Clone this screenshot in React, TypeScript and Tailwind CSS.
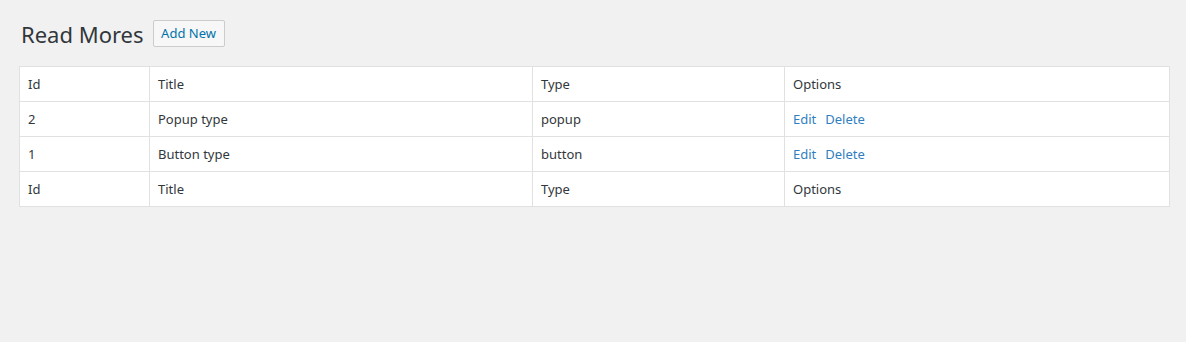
import React from "react";

const rows = [
  { id: "2", title: "Popup type", type: "popup" },
  { id: "1", title: "Button type", type: "button" },
];

const cell = "border border-[#e1e1e1] pl-2 pr-2 pt-[2px] pb-0 h-[35px] text-left align-middle font-normal";

export default function App() {
  return (
    <div
      className="w-[1186px] h-[342px] bg-[#f1f1f1] text-[#32373c] text-[13px]"
      style={{ fontFamily: '"Segoe UI", "Noto Sans", sans-serif' }}
    >
      <div className="pl-[20px] pt-[20px] flex items-center h-[27px] box-content">
        <h1 className="text-[22px] leading-[27px] font-normal text-[#32373c] ml-[1px] pt-[1px]">Read Mores</h1>
        <button className="ml-[9px] h-[27px] w-[72px] border border-[#cccccc] rounded-[2px] bg-[#f7f7f7] text-[#0073aa] text-[13px] font-normal leading-none">
          Add New
        </button>
      </div>
      <div className="pl-[19px] pt-[19px]">
        <table className="table-fixed border-collapse bg-white w-[1150px]">
          <colgroup>
            <col className="w-[130px]" />
            <col className="w-[383px]" />
            <col className="w-[252px]" />
            <col className="w-[385px]" />
          </colgroup>
          <thead>
            <tr>
              <th className={cell}>Id</th>
              <th className={cell}>Title</th>
              <th className={cell}>Type</th>
              <th className={cell}>Options</th>
            </tr>
          </thead>
          <tbody>
            {rows.map((r) => (
              <tr key={r.id}>
                <td className={cell}>{r.id}</td>
                <td className={cell}>{r.title}</td>
                <td className={cell}>{r.type}</td>
                <td className={cell}>
                  <span className="text-[#2f7fc0]">Edit</span>
                  <span className="text-[#2f7fc0] ml-[9px]">Delete</span>
                </td>
              </tr>
            ))}
          </tbody>
          <tfoot>
            <tr>
              <th className={cell}>Id</th>
              <th className={cell}>Title</th>
              <th className={cell}>Type</th>
              <th className={cell}>Options</th>
            </tr>
          </tfoot>
        </table>
      </div>
    </div>
  );
}
